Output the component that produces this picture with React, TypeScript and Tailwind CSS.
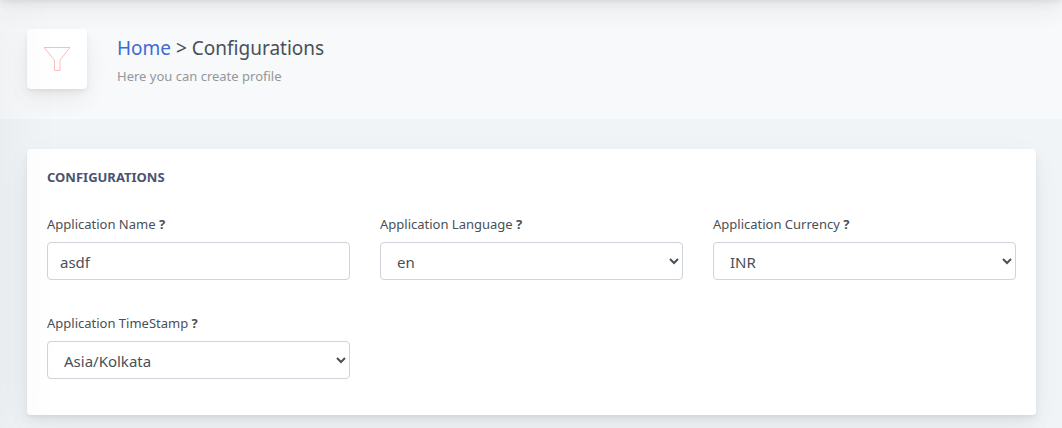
import { useState } from "react";
import type { ReactNode } from "react";

const control =
  "block h-[38px] w-full rounded border border-[#ced4da] bg-white px-3 pt-0.5 text-[15px] leading-6 text-[#495057] outline-none focus:border-[#80bdff]";

const cardShadow =
  "shadow-[0_8px_35px_rgba(4,9,20,0.03),0_15px_23px_rgba(4,9,20,0.03),0_4px_9px_rgba(4,9,20,0.05),0_2px_3px_rgba(4,9,20,0.03)]";

function Field({ id, label, children }: { id: string; label: string; children: ReactNode }) {
  return (
    <div>
      <label htmlFor={id} className="mb-2 block text-[13px] leading-5 text-[#495057]">
        {label} <b className="font-bold">?</b>
      </label>
      {children}
    </div>
  );
}

function SelectField({ id, label, options }: { id: string; label: string; options: string[] }) {
  const [value, setValue] = useState(options[0]);
  return (
    <Field id={id} label={label}>
      <select id={id} value={value} onChange={(e) => setValue(e.target.value)} className={control}>
        {options.map((option) => (
          <option key={option}>{option}</option>
        ))}
      </select>
    </Field>
  );
}

export default function App() {
  const [name, setName] = useState("asdf");
  return (
    <div className="relative min-h-screen overflow-hidden bg-[#f1f4f6] font-['Noto_Sans','Open_Sans',sans-serif] text-[#495057]">
      {/* Shadows cast by the app bar above and the sidebar to the left */}
      <div className="pointer-events-none absolute inset-x-0 -top-15 z-10 h-15 shadow-[0_8px_35px_rgba(4,9,20,0.03),0_15px_23px_rgba(4,9,20,0.03),0_4px_9px_rgba(4,9,20,0.05),0_2px_3px_rgba(4,9,20,0.03)]" />
      <div className="pointer-events-none absolute inset-y-0 -left-70 w-70 shadow-[7px_0_60px_rgba(0,0,0,0.05)]" />

      <header className="flex items-center bg-white/45 pt-[29px] pr-[26px] pb-[30px] pl-[27px]">
        <div className={`mr-[30px] flex size-[60px] items-center justify-center rounded bg-white ${cardShadow}`}>
          <svg viewBox="0 0 30 30" className="size-[30px]" fill="none" stroke="#fcbcbc" strokeWidth="1" aria-hidden="true">
            <path d="M2 3.5h26L18 16.2v10.3h-5.5V16.2z" />
          </svg>
        </div>
        <div>
          <h1 className="pt-0.5 text-[19px] leading-7">
            <a href="#home" className="text-[#3f6ad8]">Home</a> &gt; Configurations
          </h1>
          <p className="pt-1 text-[13px] leading-5 text-[#949799]">Here you can create profile</p>
        </div>
      </header>

      <main className="pt-[30px] pr-[26px] pb-[30px] pl-[27px]">
        <section className={`rounded bg-white px-5 pt-[18px] pb-9 ${cardShadow}`}>
          <h2 className="mb-[27px] text-[13px] leading-5 font-bold text-[#495472] uppercase">Configurations</h2>
          <form className="grid grid-cols-3 gap-x-[30px] gap-y-[33px]">
            <Field id="app-name" label="Application Name">
              <input id="app-name" type="text" value={name} onChange={(e) => setName(e.target.value)} className={control} />
            </Field>
            <SelectField id="app-language" label="Application Language" options={["en"]} />
            <SelectField id="app-currency" label="Application Currency" options={["INR"]} />
            <SelectField id="app-timestamp" label="Application TimeStamp" options={["Asia/Kolkata"]} />
          </form>
        </section>
      </main>
    </div>
  );
}
